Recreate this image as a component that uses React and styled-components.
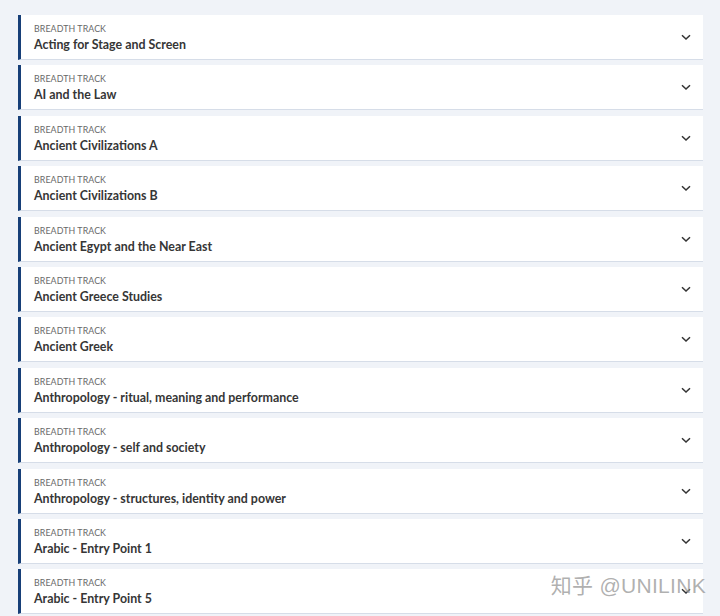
import React from 'react';
import styled, { createGlobalStyle } from 'styled-components';

const GlobalStyle = createGlobalStyle`
  html, body {
    margin: 0;
    padding: 0;
    background: #f0f3f8;
    font-family: "Source Sans Pro", "Lato", "Noto Sans", sans-serif;
  }
`;

const Page = styled.div`
  position: relative;
  height: 616px;
  overflow: hidden;
  padding: 15px 17px 0 18px;
  box-sizing: border-box;
  display: flex;
  flex-direction: column;
  gap: 5.4px;
`;

const Card = styled.div`
  flex: none;
  height: 44px;
  background: #ffffff;
  border-left: 3px solid #173f78;
  border-bottom: 1px solid #d6dde8;
  display: flex;
  align-items: center;
  padding: 0 11px 0 13px;
`;

const Text = styled.div`
  flex: 1;
  display: flex;
  flex-direction: column;
  gap: 3px;
  padding-top: 2px;
`;

const Label = styled.div`
  font-size: 8.8px;
  line-height: 10px;
  color: #686868;
  letter-spacing: 0.1px;
  text-transform: uppercase;
`;

const Title = styled.div`
  font-size: 12.4px;
  line-height: 15px;
  font-weight: 700;
  color: #363636;
`;

const Chevron = styled.svg`
  width: 12px;
  height: 12px;
  flex: none;
`;

const Watermark = styled.div`
  position: absolute;
  right: 14px;
  bottom: 17px;
  font-family: "Liberation Sans", "Noto Sans CJK SC", sans-serif;
  font-size: 21px;
  color: rgba(150, 150, 150, 0.75);
  letter-spacing: 0.3px;
  pointer-events: none;
`;

const tracks = [
  'Acting for Stage and Screen',
  'AI and the Law',
  'Ancient Civilizations A',
  'Ancient Civilizations B',
  'Ancient Egypt and the Near East',
  'Ancient Greece Studies',
  'Ancient Greek',
  'Anthropology - ritual, meaning and performance',
  'Anthropology - self and society',
  'Anthropology - structures, identity and power',
  'Arabic - Entry Point 1',
  'Arabic - Entry Point 5',
];

export default function App() {
  return (
    <>
      <GlobalStyle />
      <Page>
        {tracks.map((t) => (
          <Card key={t}>
            <Text>
              <Label>Breadth Track</Label>
              <Title>{t}</Title>
            </Text>
            <Chevron viewBox="0 0 12 12">
              <path d="M2 4.2 L6 8 L10 4.2" fill="none" stroke="#333" strokeWidth="1.5" />
            </Chevron>
          </Card>
        ))}
        <Watermark>知乎 @UNILINK</Watermark>
      </Page>
    </>
  );
}
